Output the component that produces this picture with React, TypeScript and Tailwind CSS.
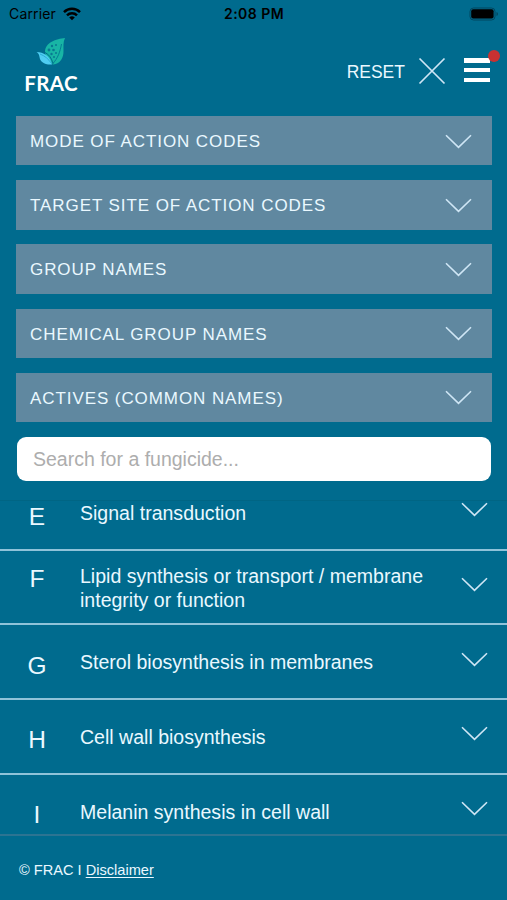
const filters = [
  'MODE OF ACTION CODES',
  'TARGET SITE OF ACTION CODES',
  'GROUP NAMES',
  'CHEMICAL GROUP NAMES',
  'ACTIVES (COMMON NAMES)',
];

const rows = [
  { code: 'E', name: 'Signal transduction' },
  { code: 'F', name: 'Lipid synthesis or transport / membrane integrity or function', tall: true },
  { code: 'G', name: 'Sterol biosynthesis in membranes' },
  { code: 'H', name: 'Cell wall biosynthesis' },
  { code: 'I', name: 'Melanin synthesis in cell wall' },
];

function Chevron() {
  return (
    <svg width="27" height="15" viewBox="0 0 27 15" fill="none" stroke="#cfe6f5" strokeWidth="1.6" className="shrink-0">
      <path d="M1 1.2 13.5 13.4 26 1.2" />
    </svg>
  );
}

function StatusBar() {
  return (
    <div className="grid h-7 grid-cols-3 items-center pl-[9px] pr-2 font-[Inter,sans-serif] text-black">
      <div className="flex items-center gap-[7px]">
        <span className="text-[14px] leading-none tracking-[0.15px]">Carrier</span>
        <svg width="18" height="14" viewBox="0 0 18 14" fill="none" stroke="#000" strokeWidth="2.5">
          <path d="M1 5.1a11.4 11.4 0 0 1 16 0" />
          <path d="M4 8.3a7.2 7.2 0 0 1 10 0" />
          <path d="M9 13.3 6.2 10.5a4 4 0 0 1 5.6 0z" fill="#000" stroke="none" />
        </svg>
      </div>
      <div className="text-center text-[14px] font-semibold leading-none tracking-[0.45px]">2:08 PM</div>
      <svg width="30" height="14" viewBox="0 0 30 14" className="justify-self-end">
        <rect x="1" y="1" width="25" height="12" rx="3.5" fill="none" stroke="#00475f" strokeWidth="1" />
        <rect x="2.2" y="2.2" width="22.4" height="9.4" rx="2" fill="#000" />
        <path d="M27.5 5v4q1.5-.7 1.500-2t-1.500-2z" fill="#00475f" />
      </svg>
    </div>
  );
}

function Logo() {
  return (
    <div className="flex w-14 flex-col items-center">
      <svg width="30" height="29" viewBox="0 0 30 29">
        <path d="M29 1C20 2 9.500 5 9 15c0 5 3 10 8 12.500 8-1 10.500-7 10.500-13.500 0-5-.5-9 1.500-13z" fill="#18b5a5" />
        <path d="M.5 15c7 .5 13 3 15.500 12.500C8 28 4 24.500 3.500 20 3 17 2 16 .5 15z" fill="#4fcdf2" />
        <path d="M16.500 27C22 21 24 15 25.500 7" fill="none" stroke="#007891" strokeWidth=".9" />
        <path d="M4 17c5 2 8.500 5 11.500 9.500" fill="none" stroke="#1b9cc4" strokeWidth=".7" />
        <path d="M9 15.500c4 2 6.500 5.500 8 11" fill="none" stroke="#006b8e" strokeWidth="1" />
        <g fill="#087991">
          <circle cx="16" cy="9" r="1.200" />
          <circle cx="20" cy="8" r="1" />
          <circle cx="13" cy="13" r="1.400" />
          <circle cx="17.500" cy="13" r="1.300" />
          <circle cx="15.500" cy="17" r="1.200" />
          <circle cx="20" cy="16" r="1" />
          <circle cx="18" cy="20" r="1" />
        </g>
      </svg>
      <div className="mt-[5px] font-[Lato,sans-serif] text-[20.500px] font-bold leading-[24px] tracking-[0.400px]">FRAC</div>
    </div>
  );
}

export default function App() {
  return (
    <div className="flex h-[900px] w-[507px] flex-col overflow-hidden bg-[#006b8e] font-['Liberation_Sans',Arial,sans-serif] text-[#eaf8ff]">
      <StatusBar />
      <header className="flex h-[88px] shrink-0 items-start justify-between pl-[23px] pr-[17px] pt-[9px] text-white">
        <Logo />
        <div className="flex items-start pt-[20px]">
          <span className="pt-px text-[17.500px] leading-[28px] text-[#eaf8ff]">RESET</span>
          <svg width="28" height="28" viewBox="0 0 28 28" stroke="#cfe6f5" strokeWidth="1.7" className="ml-[13px]">
            <path d="M1.500 1.500 26.500 26.500M26.500 1.500 1.500 26.500" />
          </svg>
          <div className="relative ml-[18px] mt-px flex h-6 w-[26px] flex-col justify-between">
            <span className="h-[4.500px] bg-white" />
            <span className="h-[4.500px] bg-white" />
            <span className="h-[4.500px] bg-white" />
            <span className="absolute -right-[9.500px] -top-[8px] size-3 rounded-full bg-[#c93131]" />
          </div>
        </div>
      </header>

      <div className="flex shrink-0 flex-col gap-[14.800px] pl-4 pr-[15px]">
        {filters.map((label) => (
          <button key={label} className="flex h-[49.400px] w-full items-center justify-between bg-[#6088a0] pl-[14px] pr-5">
            <span className="pt-[2px] text-[17px] tracking-[0.920px]">{label}</span>
            <span className="pt-px"><Chevron /></span>
          </button>
        ))}
      </div>
      <div className="pl-[17px] pr-4 pt-[15px]">
        <input
          placeholder="Search for a fungicide..."
          className="block h-[43.500px] w-full rounded-[9px] bg-white px-4 pt-[2px] text-[19.500px] text-gray-700 outline-none placeholder:text-[#adadad]"
        />
      </div>

      <main className="mt-[19.500px] flex min-h-0 flex-1 flex-col justify-start overflow-hidden border-t border-[#006584]">
        <div className="-mt-[25px]">
          {rows.map((row) => (
            <div key={row.code} className="flex h-[74.600px] items-center border-b-2 border-[#8fc3d9] pl-[20px] pr-[19px]">
              <span className={row.tall ? 'w-[34px] pb-[15px] text-center text-[24.500px]' : 'w-[34px] pt-[9px] text-center text-[24.500px]'}>
                {row.code}
              </span>
              <span className="ml-[26px] w-[360px] pt-[2px] text-[19.550px] leading-[24.500px]">{row.name}</span>
              <span className="ml-auto pb-[5px]"><Chevron /></span>
            </div>
          ))}
        </div>
      </main>
      <footer className="flex h-[66px] shrink-0 items-center border-t-2 border-[#2c7492] pl-[19px] pt-[6px] text-[14.600px]">
        <span>© FRAC I <a className="underline underline-offset-2">Disclaimer</a></span>
      </footer>
    </div>
  );
}
